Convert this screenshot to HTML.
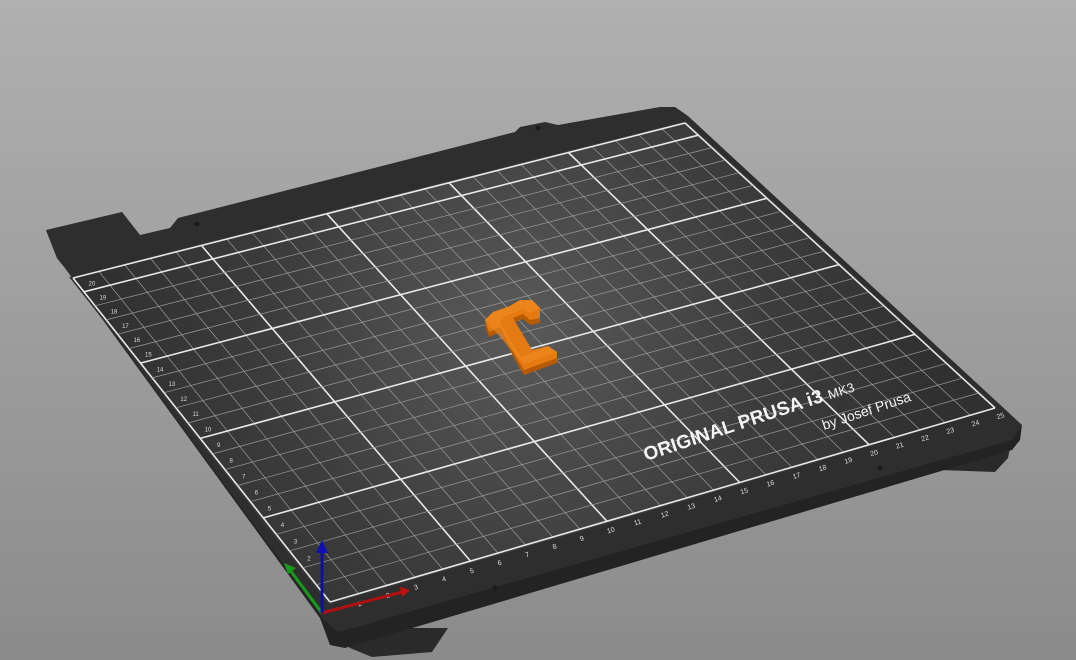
<!DOCTYPE html>
<html><head><meta charset="utf-8"><style>
html,body{margin:0;padding:0;width:1076px;height:660px;overflow:hidden;background:linear-gradient(#b0b0b0,#8b8b8b);}
svg{display:block}
text{font-family:"Liberation Sans",sans-serif;}
</style></head><body>
<svg id="s" width="1076" height="660" viewBox="0 0 1076 660" xmlns="http://www.w3.org/2000/svg">
<defs>
<radialGradient id="rg" cx="520" cy="330" r="420" gradientUnits="userSpaceOnUse">
<stop offset="0" stop-color="#5a5a5a"/><stop offset="0.6" stop-color="#3c3c3c"/><stop offset="1" stop-color="#303030"/>
</radialGradient>
</defs>
<!-- feet -->
<polygon points="330,628 350,648 372,657 432,652 448,628" fill="#2a2a2a"/>
<polygon points="925,455 940,470 995,472 1008,458 1010,448" fill="#2a2a2a"/>
<!-- side faces -->
<polygon points="46,230 57,258 65,268 320,618 330,645 345,648 1012,450 1020,440 1022,425 1012,438 338,632 325,618 70,262 50,232" fill="#232323"/>
<!-- top plate -->
<polygon points="46,230 122,212 140,235 170,228 178,218 515,132 520,127 545,122 558,125 660,107 675,107 688,116 1022,425 1012,440 338,632 324,620 65,268 57,258" fill="#2e2e2e"/>
<circle cx="197" cy="224" r="2.5" fill="#1a1a1a"/><circle cx="538" cy="128" r="2.5" fill="#1a1a1a"/>
<circle cx="880" cy="468" r="2.5" fill="#1a1a1a"/><circle cx="495" cy="588" r="2.5" fill="#1a1a1a"/>
<g id="grid"></g>
<!-- text -->
<g fill="#f4f4f4" font-weight="bold">
<text x="0" y="0" font-size="19" transform="translate(646,461) rotate(-18.5)" letter-spacing="0.2">ORIGINAL PRUSA i3 <tspan font-size="13" font-weight="normal">MK3</tspan></text>
<text x="0" y="0" font-size="14" font-weight="normal" transform="translate(824,430) rotate(-18.5)">by Josef Prusa</text>
</g>
<!-- orange part -->
<polygon transform="translate(0,5)" points="485,320 493,312 510,306 520,300 532,300 540,308 540,318 530,320 523,314 513,318 532,350 548,346 557,352 557,358 524,370 519,362 500,327 489,332" fill="#b65a04"/>
<polygon points="485,320 493,312 510,306 520,300 532,300 540,308 540,318 530,320 523,314 513,318 532,350 548,346 557,352 557,358 524,370 519,362 500,327 489,332" fill="#e57a12"/>
<polygon points="485,320 493,312 510,306 520,300 532,300 540,308 530,313 523,309 505,316 500,322 521,357 548,346 557,352 524,364" fill="#ee8a22" opacity="0.6"/>
<!-- axes -->
<line x1="322" y1="613" x2="402" y2="592" stroke="#b01010" stroke-width="3"/>
<polygon points="400,587 410,590 402,597" fill="#c01010"/>
<line x1="322" y1="613" x2="290" y2="570" stroke="#1a9a1a" stroke-width="3"/>
<polygon points="284,563 296,568 288,574" fill="#1a9a1a"/>
<line x1="322" y1="613" x2="322" y2="552" stroke="#1010a0" stroke-width="3"/>
<polygon points="316,553 328,553 322,540" fill="#1010b0"/>
</svg>
<script>
(function(){
var A=[330,602],B=[995,408],C=[685,123],D=[73,278];
var dx1=B[0]-C[0],dx2=D[0]-C[0],dx3=A[0]-B[0]+C[0]-D[0];
var dy1=B[1]-C[1],dy2=D[1]-C[1],dy3=A[1]-B[1]+C[1]-D[1];
var den=dx1*dy2-dx2*dy1;
var g=(dx3*dy2-dx2*dy3)/den,h=(dx1*dy3-dx3*dy1)/den;
var a=B[0]-A[0]+g*B[0],b=D[0]-A[0]+h*D[0],c=A[0];
var d=B[1]-A[1]+g*B[1],e=D[1]-A[1]+h*D[1],f=A[1];
function P(u,v){u/=250;v/=210;var w=g*u+h*v+1;return [(a*u+b*v+c)/w,(d*u+e*v+f)/w];}
var s='';
var q=[P(-1,-1),P(251,-1),P(251,211),P(-1,211)];
s+='<polygon points="'+q.map(function(p){return p.join(',')}).join(' ')+'" fill="url(#rg)"/>';
function L(p1,p2,col,wd){s+='<line x1="'+p1[0].toFixed(1)+'" y1="'+p1[1].toFixed(1)+'" x2="'+p2[0].toFixed(1)+'" y2="'+p2[1].toFixed(1)+'" stroke="'+col+'" stroke-width="'+wd+'"/>';}
for(var u=0;u<=250;u+=10){var m=(u%50==0);L(P(u,0),P(u,210),m?'#e8e8e8':'#9a9a9a',m?1.6:0.7);}
for(var v=0;v<=210;v+=10){var m=(v%50==0||v==210);L(P(0,v),P(250,v),m?'#e8e8e8':'#9a9a9a',m?1.6:0.7);}
for(var u=10;u<=250;u+=10){var p=P(u-3,-6);s+='<text x="'+p[0].toFixed(1)+'" y="'+p[1].toFixed(1)+'" font-size="7" fill="#dcdcdc" transform="rotate(-17 '+p[0].toFixed(1)+' '+p[1].toFixed(1)+')">'+(u/10)+'</text>';}
for(var v=10;v<=200;v+=10){var p=P(3,v+3);s+='<text x="'+p[0].toFixed(1)+'" y="'+p[1].toFixed(1)+'" font-size="6" fill="#dcdcdc">'+(v/10)+'</text>';}
document.getElementById('grid').innerHTML=s;
})();
</script>
</body></html>
